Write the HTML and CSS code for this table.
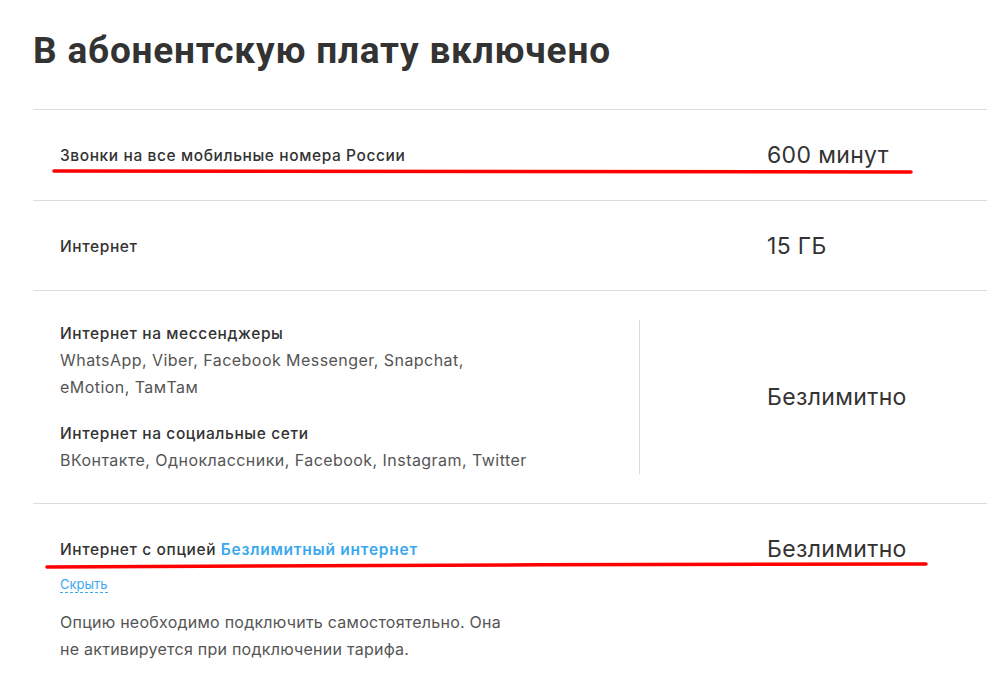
FILE: index.html
```html
<!DOCTYPE html>
<html lang="ru">
<head>
<meta charset="utf-8">
<link rel="stylesheet" href="styles.css">
</head>
<body>
<div class="page">
  <h1 class="title">В абонентскую плату включено</h1>
  <div class="table">
    <div class="row">
      <div class="cell-left"><div class="label">Звонки на все мобильные номера России</div></div>
      <div class="cell-right"><div class="value">600 минут</div></div>
    </div>
    <div class="row row-second">
      <div class="cell-left"><div class="label">Интернет</div></div>
      <div class="cell-right"><div class="value">15 ГБ</div></div>
    </div>
    <div class="row row-tall">
      <div class="cell-left cell-split">
        <div class="group">
          <div class="label">Интернет на мессенджеры</div>
          <div class="desc">WhatsApp, Viber, Facebook Messenger, Snapchat,<br>eMotion, ТамТам</div>
        </div>
        <div class="group">
          <div class="label">Интернет на социальные сети</div>
          <div class="desc">ВКонтакте, Одноклассники, Facebook, Instagram, Twitter</div>
        </div>
      </div>
      <div class="cell-right cell-center"><div class="value">Безлимитно</div></div>
    </div>
    <div class="row row-last">
      <div class="cell-left">
        <div class="label">Интернет с опцией <a class="link" href="#">Безлимитный интернет</a></div>
        <a class="toggle" href="#">Скрыть</a>
        <p class="note">Опцию необходимо подключить самостоятельно. Она<br>не активируется при подключении тарифа.</p>
      </div>
      <div class="cell-right"><div class="value">Безлимитно</div></div>
    </div>
  </div>
  <svg class="marks" width="996" height="689" viewBox="0 0 996 689">
    <path d="M54 171 C 300 170, 600 173, 911 172" stroke="#ff0000" stroke-width="3.5" fill="none" stroke-linecap="round"/>
    <path d="M47 567 C 300 567, 650 563, 926 564" stroke="#ff0000" stroke-width="3.5" fill="none" stroke-linecap="round"/>
  </svg>
</div>
</body>
</html>
```

FILE: styles.css
```css
* { box-sizing: border-box; }
html, body { margin: 0; padding: 0; background: #fff; }
body { font-family: "Inter", "Liberation Sans", sans-serif; color: #333; }
.page { position: relative; width: 996px; height: 689px; overflow: hidden; padding: 0 9px 0 33px; }
.title {
  font-family: Roboto, "Liberation Sans", sans-serif;
  font-weight: 700;
  font-size: 37px;
  line-height: 40px;
  margin: 0;
  padding-top: 31px;
  height: 109px;
  color: #333;
  letter-spacing: 0.8px;
}
.table { border-top: 1px solid #dcdcdc; }
.row { display: flex; border-bottom: 1px solid #dcdcdc; padding: 32px 0 31px 27px; }
.row-second { padding-bottom: 30px; }
.row-tall { padding: 29px 0 29px 27px; }
.row-last { border-bottom: none; padding-bottom: 0; }
.cell-left { width: 580px; }
.cell-split { border-right: 1px solid #dcdcdc; }
.cell-right { padding-left: 127px; }
.cell-center { display: flex; align-items: center; }
.label { font-size: 15.5px; line-height: 27px; font-weight: 500; color: #333; letter-spacing: 0.6px; white-space: nowrap; }
.value { font-size: 23px; line-height: 27px; font-weight: 400; color: #333; letter-spacing: 0.35px; }
.desc { font-size: 16px; line-height: 27px; color: #555; letter-spacing: 0.45px; }
.group + .group { margin-top: 19px; }
.link { color: #3aa8ee; text-decoration: none; font-weight: 600; letter-spacing: 0.75px; }
.toggle {
  display: inline-block;
  margin-top: 13px;
  font-size: 13px;
  line-height: 16px;
  color: #3aa8ee;
  text-decoration: none;
  border-bottom: 1px dashed #3aa8ee;
}
.note { margin: 16px 0 0; font-size: 16px; line-height: 27px; color: #555; letter-spacing: 0.25px; }
.marks { position: absolute; left: 0; top: 0; pointer-events: none; }
```
